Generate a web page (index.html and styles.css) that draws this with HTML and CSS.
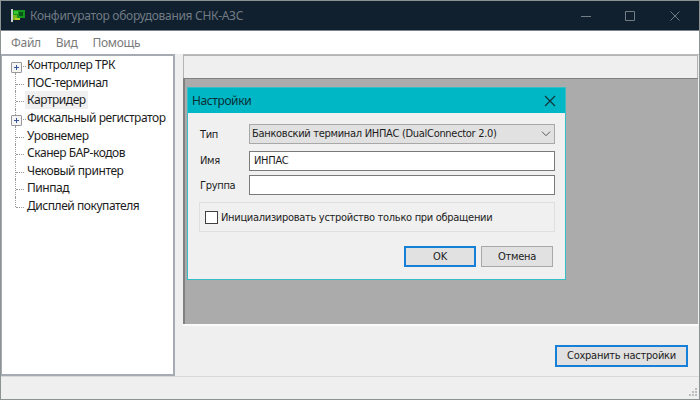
FILE: index.html
```
<!DOCTYPE html>
<html lang="ru">
<head>
<meta charset="utf-8">
<title>Конфигуратор оборудования СНК-АЗС</title>
<link rel="stylesheet" href="styles.css">
</head>
<body>
<div class="window">
  <header class="titlebar">
    <svg class="app-icon" width="15" height="15" viewBox="0 0 15 15">
      <path d="M1 1h2v13H1z" fill="#c9ced0"/>
      <path d="M3 2h12v8H10v2H3z" fill="#15951e"/>
      <path d="M3 7h4v5H3z" fill="#78b51b"/>
      <path d="M4 3h4v3H4z" fill="#38c52e"/>
      <path d="M9 4h4v4H9z" fill="#07551b"/>
      <path d="M5 10h5v2H5z" fill="#b9cf24"/>
    </svg>
    <span class="title">Конфигуратор оборудования СНК-АЗС</span>
    <svg class="controls" width="101" height="12" viewBox="0 0 101 12" fill="none" stroke="#737d86">
      <path d="M0 6.500h10M44.500 1.500h9v9h-9zM89.500 1.500l9 9m0-9l-9 9"/>
    </svg>
  </header>
  <nav class="menu"><span class="m-file">Файл</span><span class="m-view">Вид</span><span class="m-help">Помощь</span></nav>
  <div class="main">
    <ul class="tree">
      <li class="branch"><span>Контроллер ТРК</span></li>
      <li><span>ПОС-терминал</span></li>
      <li><span class="selected">Картридер</span></li>
      <li class="branch"><span>Фискальный регистратор</span></li>
      <li><span>Уровнемер</span></li>
      <li><span>Сканер БАР-кодов</span></li>
      <li><span>Чековый принтер</span></li>
      <li><span>Пинпад</span></li>
      <li><span>Дисплей покупателя</span></li>
    </ul>
    <section class="content">
      <div class="strip"></div>
      <div class="workspace"></div>
      <div class="actions"><button class="btn primary save"><span>Сохранить настройки</span></button></div>
    </section>
  </div>
  <footer class="status">
    <svg width="9" height="9" viewBox="0 0 9 9" fill="#bdbdbd"><path d="M6 0h2v2H6zM3 3h2v2H3zM6 3h2v2H6zM0 6h2v2H0zM3 6h2v2H3zM6 6h2v2H6z"/></svg>
  </footer>

  <div class="dialog">
    <div class="dialog-title"><span>Настройки</span>
      <svg width="12" height="12" viewBox="0 0 12 12" fill="none" stroke="#10353a" stroke-width="1.200"><path d="M1 1l10 10M11 1L1 11"/></svg>
    </div>
    <div class="form">
      <div class="row"><span class="label">Тип</span>
        <div class="select"><span>Банковский терминал ИНПАС (DualConnector 2.0)</span>
          <svg width="10" height="6" viewBox="0 0 10 6" fill="none" stroke="#555"><path d="M1 .7l4 4 4-4"/></svg>
        </div>
      </div>
      <div class="row name"><span class="label">Имя</span><div class="input"><span>ИНПАС</span></div></div>
      <div class="row"><span class="label">Группа</span><div class="input"></div></div>
    </div>
    <div class="group"><i class="checkbox"></i><span>Инициализировать устройство только при обращении</span></div>
    <div class="buttons">
      <button class="btn primary ok"><span>OK</span></button>
      <button class="btn cancel"><span>Отмена</span></button>
    </div>
  </div>
</div>
</body>
</html>
```
FILE: styles.css
```
* { box-sizing: border-box; }
body { margin: 0; }
.window {
  position: relative;
  display: flex;
  flex-direction: column;
  width: 700px;
  height: 400px;
  overflow: hidden;
  background: #efefef;
  border: 1px solid #8d9292;
  font: 12px/18px "Noto Sans", "Open Sans", sans-serif;
  letter-spacing: -.3px;
  color: #1c1c1c;
  white-space: nowrap;
}
.titlebar {
  display: flex;
  align-items: center;
  height: 30px;
  padding: 0 17px 0 9px;
  background: #10202f;
  border-bottom: 1px solid #7b848b;
  color: #717b84;
}
.title { margin-left: 5px; }
.controls { margin-left: auto; }
.menu {
  display: flex;
  height: 23px;
  padding: 3px 0 0 10px;
  background: #fff;
  color: #7a7a7a;
}
.m-view { margin-left: 15px; }
.m-help { margin-left: 15px; }
.main { display: flex; height: 322px; }
.tree {
  width: 174px;
  margin: 0;
  padding: 0 0 0 14px;
  list-style: none;
  background: #fff;
  border: solid #a6aab2;
  border-width: 2px 2px 2px 1px;
  letter-spacing: -.45px;
}
.tree li {
  position: relative;
  display: flex;
  height: 17.65px;
  line-height: 17px;
}
.tree li::before {
  content: "";
  flex: none;
  width: 8px;
  height: 10px;
  margin-right: 1px;
  border-bottom: 1px dotted #9a9a9a;
}
.tree li::after {
  content: "";
  position: absolute;
  left: -1px;
  top: 0;
  height: 100%;
  border-left: 1px dotted #9a9a9a;
}
.tree li:first-child::after { top: 10px; height: 8px; }
.tree li:last-child::after { height: 10px; }
.tree li.branch::before {
  position: relative;
  z-index: 1;
  width: 9px;
  height: 9px;
  margin: 6px 5px 0 -5px;
  border: 1px solid #979797;
  border-radius: 1px;
  background:
    linear-gradient(#39539a, #39539a) center / 5px 1px no-repeat,
    linear-gradient(#39539a, #39539a) center / 1px 5px no-repeat,
    #f5f5f5;
}
.tree li > span { padding: 0 2px; }
.tree .branch > span {
  margin-left: -4px;
  padding-left: 6px;
  background: linear-gradient(90deg, #9a9a9a 1px, transparent 1px, transparent 2px, #9a9a9a 2px, #9a9a9a 3px, transparent 3px) 0 10px / 4px 1px no-repeat;
}
.tree li.branch::before { margin-right: 5px; }
.tree .branch > span { margin-left: -4px; padding-left: 4px; }
.tree .selected { background-color: #f0f0f0; }
.content {
  display: flex;
  flex-direction: column;
  flex: 1;
  margin-left: 8px;
  border-top: 1px solid #bcbcbc;
}
.strip {
  height: 23px;
  margin-right: 1px;
  border: 1px solid #b4b4b4;
  border-bottom: 0;
  background: #efefef;
}
.workspace {
  height: 246px;
  margin-right: 1px;
  background: #ababab;
  border: solid #808080;
  border-width: 1px 0 0 2px;
  box-shadow: 0 2px #fafafa;
}
.actions { display: flex; justify-content: flex-end; padding: 21px 11px 0 0; }
.btn {
  display: flex;
  align-items: center;
  justify-content: center;
  height: 21px;
  padding: 0;
  border: 1px solid #a8a8a8;
  background: #e1e1e1;
  font: 11px/14px "DejaVu Sans Condensed", "DejaVu Sans", sans-serif;
  letter-spacing: -.25px;
  color: #1c1c1c;
}
.primary { border: 2px solid #1680d8; }
.save { width: 133px; height: 22px; }
.status {
  display: flex;
  justify-content: flex-end;
  align-items: flex-end;
  flex: 1;
  padding: 0 1px 2px;
  border-top: 1px solid #d9d9d9;
}
.dialog {
  position: absolute;
  left: 186px;
  top: 86px;
  width: 379px;
  height: 193px;
  background: #f0f0f0;
  border: 1px solid #36bdc5;
  font: 11px/14px "DejaVu Sans Condensed", "DejaVu Sans", sans-serif;
}
.form, .group { letter-spacing: -.3px; }
.dialog-title {
  display: flex;
  justify-content: space-between;
  align-items: center;
  height: 25px;
  padding: 0 9px 0 4px;
  background: #00b7c6;
  font: 12px/18px "Noto Sans", "Open Sans", sans-serif;
  letter-spacing: -.4px;
  color: #092f35;
}
.form { padding: 11px 0 0 12px; }
.row {
  display: flex;
  width: 355px;
  height: 20px;
  margin-bottom: 4px;
}
.row.name { margin-top: 7px; }
.label {
  width: 49px;
  padding-top: 4px;
}
.row.name .label { padding-top: 3px; }
.select, .input {
  display: flex;
  flex: 1;
  align-items: center;
  border: 1px solid #7a7a7a;
  background: #fff;
}
.select {
  justify-content: space-between;
  padding: 0 3px 0 2px;
  background: #e1e1e1;
  border-color: #a8a8a8;
}
.input { padding-left: 4px; }
.group {
  display: flex;
  align-items: center;
  width: 356px;
  height: 30px;
  margin: 7px 0 0 11px;
  padding-left: 5px;
  border: 1px solid #dfdfdf;
}
.group span { padding-top: 1px; }
.checkbox {
  width: 13px;
  height: 13px;
  margin-right: 3px;
  border: 1px solid #404040;
  background: #fff;
}
.buttons { display: flex; gap: 5px; margin: 14px 0 0 216px; }
.ok, .cancel { width: 72px; }
```
